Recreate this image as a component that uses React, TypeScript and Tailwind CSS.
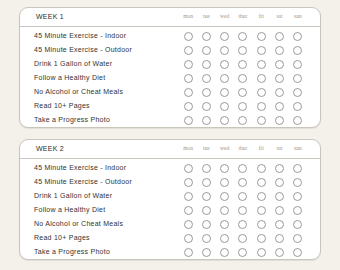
import React from "react";

const habits = [
  "45 Minute Exercise - Indoor",
  "45 Minute Exercise - Outdoor",
  "Drink 1 Gallon of Water",
  "Follow a Healthy Diet",
  "No Alcohol or Cheat Meals",
  "Read 10+ Pages",
  "Take a Progress Photo",
];
const days = ["mon", "tue", "wed", "thur", "fri", "sat", "sun"];

function Card({ week }: { week: number }) {
  return (
    <div className="w-[302px] ml-[19px] bg-white border border-[#c9c5bd] rounded-[9px] shadow-[0_1px_1px_rgba(0,0,0,0.08)]">
      <div className="h-[19px] flex items-center border-b border-[#c9c5bd]">
        <div className="pl-[16px] flex-1 text-[7px] text-[#2c2c2c] tracking-[0.25px] font-['Liberation_Sans',sans-serif]">
          WEEK {week}
        </div>
        <div className="flex pr-[13px] -mt-[2px]">
          {days.map((d) => (
            <div key={d} className="w-[18.3px] text-center text-[5.5px] text-[#9a968f] font-['Liberation_Serif',serif]">
              {d}
            </div>
          ))}
        </div>
      </div>
      <div className="pt-[2px]">
        {habits.map((h) => (
          <div key={h} className="h-[14px] flex items-center">
            <div className="pl-[14px] flex-1 text-[7px] text-[#333] tracking-[0.25px] font-['Liberation_Sans',sans-serif]">
              {h}
            </div>
            <div className="flex pr-[13px]">
              {days.map((d) => (
                <div key={d} className="w-[18.3px] flex justify-center">
                  <div className="w-[9px] h-[9px] rounded-full border border-[#9d9a95]" />
                </div>
              ))}
            </div>
          </div>
        ))}
      </div>
    </div>
  );
}

export default function App() {
  return (
    <div className="w-[340px] h-[270px] bg-[#f4f1eb] pt-[7px] flex flex-col gap-[11px]">
      <Card week={1} />
      <Card week={2} />
    </div>
  );
}
